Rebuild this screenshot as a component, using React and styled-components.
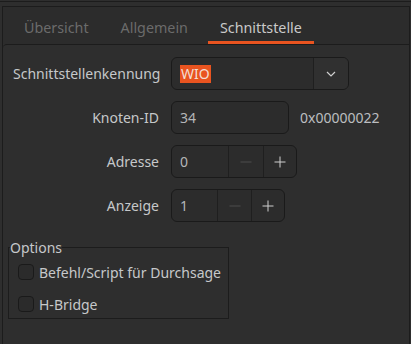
import React from 'react';
import styled, { createGlobalStyle } from 'styled-components';

const GlobalStyle = createGlobalStyle`
  html, body {
    margin: 0;
    padding: 0;
    background: #2e2e2e;
  }
  body {
    font-family: "Noto Sans", "Open Sans", sans-serif;
    font-size: 14px;
  }
`;

const Window = styled.div`
  width: 411px;
  height: 344px;
  overflow: hidden;
  background: #2e2e2e;
  box-sizing: border-box;
  padding-top: 1px;
`;

const TopRule = styled.div`
  height: 1px;
  background: #1c1c1c;
`;

const Notebook = styled.div`
  margin: 4px 0 0 2px;
  width: 408px;
  height: 340px;
  box-sizing: border-box;
  border: 1px solid #1c1c1c;
  border-bottom: none;
  display: flex;
  flex-direction: column;
`;

const TabBar = styled.div`
  display: flex;
  gap: 8px;
  padding-left: 9px;
  height: 37px;
  background: #2c2c2c;
`;

const Tab = styled.div`
  display: flex;
  align-items: center;
  justify-content: center;
  padding: 6px 12px 0;
  box-sizing: border-box;
  font-size: 14.3px;
  color: ${p => (p.$active ? '#c9c9c9' : '#6b6b6b')};
  border-bottom: 3px solid ${p => (p.$active ? '#e95420' : 'transparent')};
`;

const Panel = styled.div`
  flex: 1;
  border-top: 1px solid #1c1c1c;
  border-top-left-radius: 4px;
  background: #2e2e2e;
  padding: 12px 0 0 10px;
`;

const Form = styled.div`
  display: grid;
  grid-template-columns: 146px auto;
  column-gap: 12px;
  row-gap: 11px;
  align-items: center;
  justify-content: start;
`;

const Label = styled.div`
  color: #c6c8ca;
  text-align: right;
  white-space: nowrap;
`;

const FieldRow = styled.div`
  display: flex;
  align-items: center;
  gap: 11px;
`;

const Box = styled.div`
  display: flex;
  align-items: stretch;
  height: 33px;
  box-sizing: border-box;
  border: 1px solid #1a1a1a;
  border-radius: 6px;
  background: #2c2c2c;
  overflow: hidden;
  width: ${p => p.$width}px;
`;

const Entry = styled.div`
  flex: 1;
  display: flex;
  align-items: center;
  padding-left: 8px;
  color: #b4b6b8;
  box-sizing: border-box;
`;

const SpinEntry = styled(Entry)`
  flex: none;
  width: ${p => p.$width}px;
`;

const Selected = styled.span`
  background: #e95420;
  color: #f3ddd3;
  line-height: 18px;
  padding: 0 1px;
`;

const SideButton = styled.div`
  width: ${p => p.$width || 34}px;
  display: flex;
  align-items: center;
  justify-content: center;
  border-left: 1px solid #1f1f1f;
  background: ${p => (p.$raised ? '#303030' : 'transparent')};
  color: ${p => (p.$disabled ? '#4d4d4d' : '#cfcfcf')};
  box-sizing: border-box;
`;

const Hex = styled.span`
  color: #bcbec0;
`;

const Frame = styled.fieldset`
  margin: 17px 0 0 -5px;
  width: 221px;
  box-sizing: border-box;
  border: 1px solid #1c1c1c;
  padding: 4px 0 2px 9px;
  display: flex;
  flex-direction: column;
  gap: 8px;
`;

const Legend = styled.legend`
  padding: 0;
  margin-left: -8px;
  color: #c6c8ca;
  line-height: 17px;
`;

const CheckRow = styled.label`
  display: flex;
  align-items: center;
  gap: 5px;
  height: 24px;
  color: #c6c8ca;
`;

const CheckBox = styled.span`
  width: 16px;
  height: 16px;
  box-sizing: border-box;
  border: 1px solid #1a1a1a;
  border-radius: 4px;
  background: #2b2b2b;
`;

const Chevron = () => (
  <svg width="10" height="6" viewBox="0 0 10 6">
    <polyline points="1,1 5,5 9,1" fill="none" stroke="#cfcfcf" strokeWidth="1.2" />
  </svg>
);

const Minus = () => (
  <svg width="12" height="12" viewBox="0 0 12 12">
    <line x1="0.5" y1="6" x2="11.5" y2="6" stroke="currentColor" strokeWidth="1" />
  </svg>
);

const Plus = () => (
  <svg width="12" height="12" viewBox="0 0 12 12">
    <line x1="0.5" y1="6" x2="11.5" y2="6" stroke="currentColor" strokeWidth="1" />
    <line x1="6" y1="0.5" x2="6" y2="11.5" stroke="currentColor" strokeWidth="1" />
  </svg>
);

function SpinButton({ value, width, entryWidth }) {
  return (
    <Box $width={width}>
      <SpinEntry $width={entryWidth}>{value}</SpinEntry>
      <SideButton $disabled $width={36}><Minus /></SideButton>
      <SideButton><Plus /></SideButton>
    </Box>
  );
}

export default function App() {
  return (
    <Window>
      <GlobalStyle />
      <TopRule />
      <Notebook>
        <TabBar>
          <Tab>Übersicht</Tab>
          <Tab>Allgemein</Tab>
          <Tab $active>Schnittstelle</Tab>
        </TabBar>
        <Panel>
          <Form>
            <Label>Schnittstellenkennung</Label>
            <Box $width={178}>
              <Entry><Selected>WIO</Selected></Entry>
              <SideButton $raised $width={35}><Chevron /></SideButton>
            </Box>

            <Label>Knoten-ID</Label>
            <FieldRow>
              <Box $width={118}><Entry>34</Entry></Box>
              <Hex>0x00000022</Hex>
            </FieldRow>

            <Label>Adresse</Label>
            <SpinButton value="0" width={126} entryWidth={56} />

            <Label>Anzeige</Label>
            <SpinButton value="1" width={114} entryWidth={45} />
          </Form>

          <Frame>
            <Legend>Options</Legend>
            <CheckRow><CheckBox />Befehl/Script für Durchsage</CheckRow>
            <CheckRow><CheckBox />H-Bridge</CheckRow>
          </Frame>
        </Panel>
      </Notebook>
    </Window>
  );
}
